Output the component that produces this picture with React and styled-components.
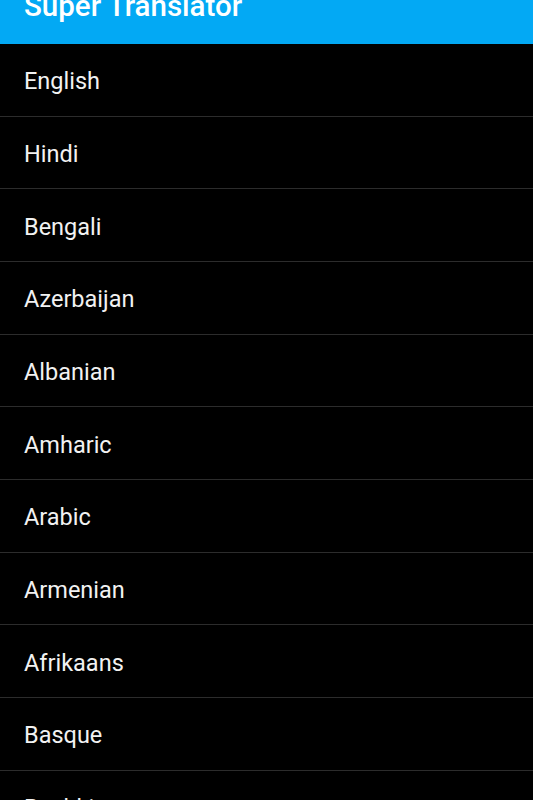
import React from "react";
import styled, { createGlobalStyle } from "styled-components";

const GlobalStyle = createGlobalStyle`
  html, body {
    margin: 0;
    padding: 0;
    background: #000;
    overflow: hidden;
  }
  body {
    font-family: Roboto, "Noto Sans", sans-serif;
  }
`;

const Screen = styled.div`
  width: 533px;
  height: 800px;
  overflow: hidden;
  background: #000;
`;

const AppBar = styled.header`
  height: 44px;
  background: #03a9f4;
  overflow: hidden;
`;

const Title = styled.h1`
  margin: -8px 0 0 24px;
  font-size: 29.5px;
  line-height: 1;
  font-weight: 500;
  color: #fff;
  white-space: nowrap;
`;

const List = styled.ul`
  margin: 0;
  padding: 0;
  list-style: none;
`;

const Row = styled.li`
  box-sizing: border-box;
  height: 72.67px;
  display: flex;
  align-items: center;
  padding: 3px 0 0 24px;
  border-bottom: 1.5px solid #2c2c2c;
  font-size: 23.5px;
  color: #f2f2f2;
`;

const languages = [
  "English",
  "Hindi",
  "Bengali",
  "Azerbaijan",
  "Albanian",
  "Amharic",
  "Arabic",
  "Armenian",
  "Afrikaans",
  "Basque",
  "Bashkir",
];

export default function App() {
  return (
    <Screen>
      <GlobalStyle />
      <AppBar>
        <Title>Super Translator</Title>
      </AppBar>
      <List>
        {languages.map((lang) => (
          <Row key={lang}>{lang}</Row>
        ))}
      </List>
    </Screen>
  );
}
